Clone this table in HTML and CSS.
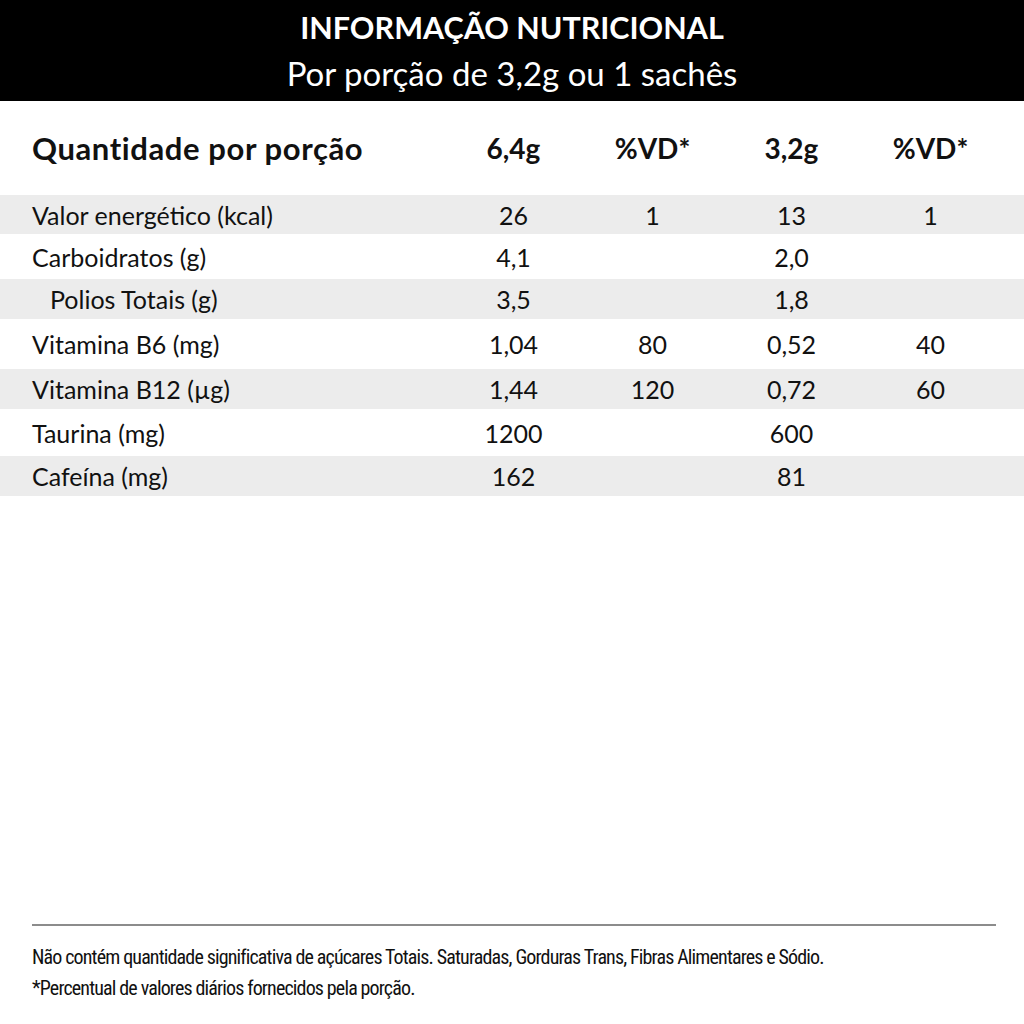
FILE: index.html
```html
<!DOCTYPE html>
<html lang="pt">
<head>
<meta charset="utf-8">
<title>Informação Nutricional</title>
<link rel="stylesheet" href="styles.css">
</head>
<body>
<div class="page">
  <header class="banner">
    <div class="banner-title">INFORMAÇÃO NUTRICIONAL</div>
    <div class="banner-sub">Por porção de 3,2g ou 1 sachês</div>
  </header>

  <section class="table">
    <div class="row head">
      <div class="label">Quantidade por porção</div>
      <div class="cell">6,4g</div>
      <div class="cell">%VD*</div>
      <div class="cell">3,2g</div>
      <div class="cell">%VD*</div>
    </div>
    <div class="row shade r1">
      <div class="label">Valor energético (kcal)</div>
      <div class="cell">26</div>
      <div class="cell">1</div>
      <div class="cell">13</div>
      <div class="cell">1</div>
    </div>
    <div class="row r2">
      <div class="label">Carboidratos (g)</div>
      <div class="cell">4,1</div>
      <div class="cell"></div>
      <div class="cell">2,0</div>
      <div class="cell"></div>
    </div>
    <div class="row shade r3">
      <div class="label sub">Polios Totais (g)</div>
      <div class="cell">3,5</div>
      <div class="cell"></div>
      <div class="cell">1,8</div>
      <div class="cell"></div>
    </div>
    <div class="row r4">
      <div class="label">Vitamina B6 (mg)</div>
      <div class="cell">1,04</div>
      <div class="cell">80</div>
      <div class="cell">0,52</div>
      <div class="cell">40</div>
    </div>
    <div class="row shade r5">
      <div class="label">Vitamina B12 (µg)</div>
      <div class="cell">1,44</div>
      <div class="cell">120</div>
      <div class="cell">0,72</div>
      <div class="cell">60</div>
    </div>
    <div class="row r6">
      <div class="label">Taurina (mg)</div>
      <div class="cell">1200</div>
      <div class="cell"></div>
      <div class="cell">600</div>
      <div class="cell"></div>
    </div>
    <div class="row shade r7">
      <div class="label">Cafeína (mg)</div>
      <div class="cell">162</div>
      <div class="cell"></div>
      <div class="cell">81</div>
      <div class="cell"></div>
    </div>
  </section>

  <footer class="notes">
    <p class="note">Não contém quantidade significativa de açúcares Totais. Saturadas, Gorduras Trans, Fibras Alimentares e Sódio.</p>
    <p class="note">*Percentual de valores diários fornecidos pela porção.</p>
  </footer>
</div>
</body>
</html>
```
FILE: styles.css
```css
html, body {
  margin: 0;
  padding: 0;
  background: #ffffff;
}

.page {
  width: 1024px;
  height: 1024px;
  display: flex;
  flex-direction: column;
  font-family: "Lato", "Open Sans", sans-serif;
  color: #111111;
}

/* ---------- black banner ---------- */
.banner {
  background: #000000;
  color: #ffffff;
  height: 101px;
  box-sizing: border-box;
  padding-top: 4px;
  display: flex;
  flex-direction: column;
  align-items: center;
}

.banner-title {
  font-weight: 700;
  font-size: 30.5px;
  line-height: 46px;
}

.banner-sub {
  font-weight: 400;
  font-size: 33px;
  line-height: 46px;
}

/* ---------- table ---------- */
.table {
  display: flex;
  flex-direction: column;
}

.row {
  display: grid;
  grid-template-columns: 444px repeat(4, 139px);
  align-items: center;
  font-size: 25px;
}

.row.shade {
  background: #ececec;
}

.row.head {
  height: 94px;
  font-weight: 700;
  font-size: 28px;
}

.row.head .label {
  font-size: 31px;
  letter-spacing: 0.6px;
}

.r1 { height: 39px; }
.r2 { height: 45px; }
.r3 { height: 40px; }
.r4 { height: 50px; }
.r5 { height: 40px; }
.r6 { height: 47px; }
.r7 { height: 40px; }

.label {
  padding-left: 32px;
  white-space: nowrap;
}

.label.sub {
  padding-left: 50px;
}

.cell {
  text-align: center;
  white-space: nowrap;
}

/* ---------- footnotes ---------- */
.notes {
  margin-top: auto;
  margin-left: 32px;
  margin-right: 28px;
  margin-bottom: 20px;
  border-top: 2px solid #8c8c8c;
  padding-top: 16px;
}

.note {
  margin: 0;
  font-family: "Roboto", sans-serif;
  font-stretch: 75%;
  font-size: 20px;
  line-height: 31px;
  letter-spacing: -0.85px;
  white-space: nowrap;
}
```
